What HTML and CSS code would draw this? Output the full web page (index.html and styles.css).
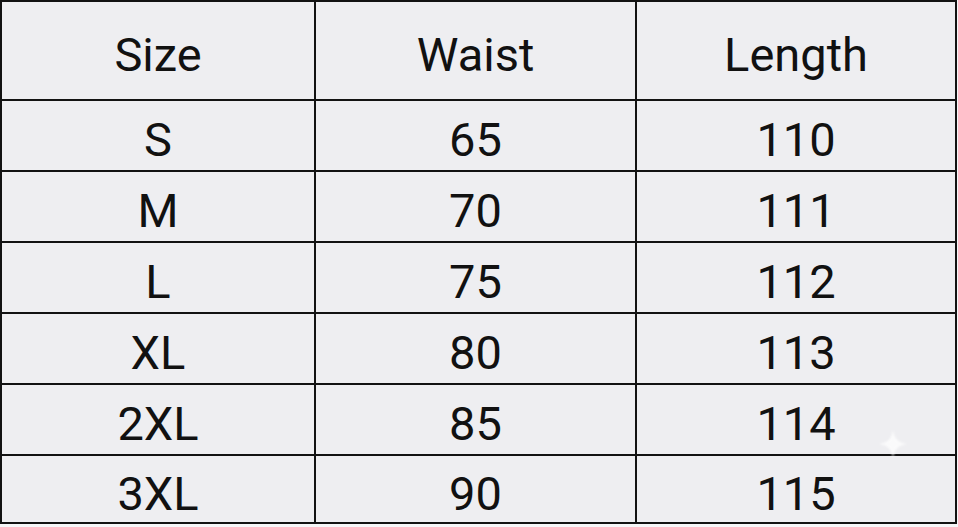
FILE: index.html
```html
<!DOCTYPE html>
<html>
<head>
<meta charset="utf-8">
<link rel="stylesheet" href="styles.css">
</head>
<body>
<div class="sheet">
  <div class="table">
    <div class="cell head">Size</div><div class="cell head">Waist</div><div class="cell head">Length</div>
    <div class="cell">S</div><div class="cell">65</div><div class="cell">110</div>
    <div class="cell">M</div><div class="cell">70</div><div class="cell">111</div>
    <div class="cell">L</div><div class="cell">75</div><div class="cell">112</div>
    <div class="cell">XL</div><div class="cell">80</div><div class="cell">113</div>
    <div class="cell">2XL</div><div class="cell">85</div><div class="cell">114</div>
    <div class="cell">3XL</div><div class="cell">90</div><div class="cell">115</div>
  </div>
  <svg class="sparkle" width="34" height="34" viewBox="0 0 34 34"><path d="M17 3 C18.5 12 22 15.5 31 17 C22 18.5 18.5 22 17 31 C15.5 22 12 18.5 3 17 C12 15.5 15.5 12 17 3 Z" fill="#ffffff"/></svg>
</div>
</body>
</html>
```
FILE: styles.css
```css
html, body {
  margin: 0;
  padding: 0;
  background: #f6f6f8;
}
.sheet {
  position: relative;
  width: 958px;
  height: 527px;
}
.table {
  display: grid;
  grid-template-columns: 312px 319px 318px;
  grid-template-rows: 97px repeat(5, 69px) 66px;
  gap: 2px;
  padding: 2px;
  background: #121212;
  width: max-content;
}
.cell {
  background: #eeeef1;
  display: flex;
  align-items: center;
  justify-content: center;
  font-family: Roboto, "Noto Sans", sans-serif;
  font-size: 47px;
  color: #111;
  padding-top: 8px;
  box-sizing: border-box;
  line-height: 1;
}
.sparkle {
  position: absolute;
  left: 876px;
  top: 427px;
  opacity: 0.75;
  filter: blur(1px);
}
```
